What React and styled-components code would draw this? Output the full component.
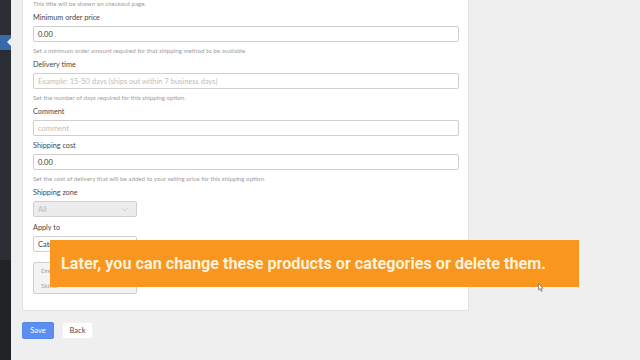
import React from "react";
import styled, { createGlobalStyle } from "styled-components";

const GlobalStyle = createGlobalStyle`
  html, body {
    margin: 0;
    padding: 0;
    background: #efeff0;
    overflow: hidden;
  }
  * {
    box-sizing: border-box;
  }
`;

const Screen = styled.div`
  position: relative;
  display: flex;
  width: 640px;
  height: 360px;
  overflow: hidden;
  font-family: Lato, "Open Sans", sans-serif;
`;

const Sidebar = styled.div`
  display: flex;
  flex-direction: column;
  width: 11px;
  flex-shrink: 0;
  background: #2a2e32;
`;

const SideGap = styled.div`
  height: ${({ h }) => h}px;
`;

const SideBottom = styled.div`
  flex: 1;
  background: #1f2326;
`;

const CurrentMark = styled.div`
  position: relative;
  height: 15px;
  background: #3868ae;

  &::after {
    content: "";
    position: absolute;
    right: 0;
    top: 3px;
    border-style: solid;
    border-width: 4.5px 4px 4.5px 0;
    border-color: transparent #efeff0 transparent transparent;
  }
`;

const Main = styled.div`
  flex: 1;
  padding: 0 0 0 11px;
  margin-top: -12px;
`;

const Card = styled.div`
  width: 447px;
  background: #fff;
  border: 1px solid #e2e2e2;
  padding: 10px 9px 16px 10px;
`;

const Field = styled.div`
  display: flex;
  flex-direction: column;
  margin-bottom: ${({ mb }) => (mb !== undefined ? mb : 4)}px;
`;

const Label = styled.div`
  font-size: 7.3px;
  line-height: 10px;
  color: #474747;
  margin-bottom: 3px;
`;

const Input = styled.div`
  height: 16px;
  width: ${({ w }) => (w ? `${w}px` : "100%")};
  border: 1px solid #cfcfcf;
  border-radius: 2px;
  background: ${({ disabled }) => (disabled ? "#ececec" : "#fff")};
  display: flex;
  align-items: center;
  justify-content: space-between;
  padding: 0 8px 0 4px;
  font-size: 7.5px;
  color: ${({ muted }) => (muted ? "#bdbdbd" : "#3a3a3a")};
`;

const Help = styled.div`
  font-size: 6.2px;
  line-height: 10px;
  color: #9d9d9d;
  margin-top: ${({ top }) => (top ? 0 : 4)}px;
`;

const ListBox = styled.div`
  width: 104px;
  height: 32px;
  margin-top: 10px;
  border: 1px solid #cfcfcf;
  border-radius: 2px;
  background: #f3f3f3;
  display: flex;
  flex-direction: column;
  justify-content: center;
  gap: 5px;
  padding: 0 7px;
  font-size: 6.5px;
  line-height: 10px;
  color: #a0a0a0;
`;

const Actions = styled.div`
  display: flex;
  gap: 8px;
  margin-top: 11px;
`;

const Button = styled.div`
  height: 17px;
  width: ${({ w }) => w}px;
  display: flex;
  align-items: center;
  justify-content: center;
  border-radius: 2px;
  font-size: 7.5px;
  background: ${({ primary }) => (primary ? "#5b8ef0" : "#fff")};
  color: ${({ primary }) => (primary ? "#fff" : "#4a4a4a")};
  border: 1px solid ${({ primary }) => (primary ? "#5487ea" : "#f2f2f2")};
`;

const Banner = styled.div`
  position: absolute;
  left: 50px;
  top: 240px;
  width: 529px;
  height: 47px;
  background: #f8961f;
  display: flex;
  align-items: center;
  padding-left: 11px;
  font-family: Roboto, "Liberation Sans", sans-serif;
  font-weight: 700;
  font-size: 16.2px;
  color: #fdf1da;
  white-space: nowrap;
`;

const Cursor = styled.svg`
  position: absolute;
  left: 538px;
  top: 283px;
`;

const Chevron = () => (
  <svg width="7" height="5" viewBox="0 0 7 5">
    <path d="M0.5 1 L3.5 4 L6.5 1" fill="none" stroke="#c8c8c8" strokeWidth="0.8" />
  </svg>
);

export default function App() {
  return (
    <Screen>
      <GlobalStyle />
      <Sidebar>
        <SideGap h={35} />
        <CurrentMark />
        <SideGap h={210} />
        <SideBottom />
      </Sidebar>
      <Main>
        <Card>
          <Field>
            <Help top>This title will be shown on checkout page.</Help>
          </Field>
          <Field>
            <Label>Minimum order price</Label>
            <Input>0.00</Input>
            <Help>Set a minimum order amount required for that shipping method to be available.</Help>
          </Field>
          <Field>
            <Label>Delivery time</Label>
            <Input muted>Example: 15-50 days (ships out within 7 business days)</Input>
            <Help>Set the number of days required for this shipping option.</Help>
          </Field>
          <Field mb={5}>
            <Label>Comment</Label>
            <Input muted>comment</Input>
          </Field>
          <Field>
            <Label>Shipping cost</Label>
            <Input>0.00</Input>
            <Help>Set the cost of delivery that will be added to your selling price for this shipping option.</Help>
          </Field>
          <Field mb={6}>
            <Label>Shipping zone</Label>
            <Input w={104} disabled muted>
              All
              <Chevron />
            </Input>
          </Field>
          <Field mb={0}>
            <Label>Apply to</Label>
            <Input w={104}>
              Categories
              <Chevron />
            </Input>
            <ListBox>
              <div>Dresses</div>
              <div>Skirts</div>
            </ListBox>
          </Field>
        </Card>
        <Actions>
          <Button primary w={32}>Save</Button>
          <Button w={31}>Back</Button>
        </Actions>
      </Main>
      <Banner>Later, you can change these products or categories or delete them.</Banner>
      <Cursor width="6" height="9" viewBox="0 0 6 9">
        <path d="M0.5 0.5 L0.5 7 L2 5.6 L3.2 8.3 L4.2 7.9 L3 5.2 L5 5.2 Z" fill="#fff" stroke="#555" strokeWidth="0.6" />
      </Cursor>
    </Screen>
  );
}
